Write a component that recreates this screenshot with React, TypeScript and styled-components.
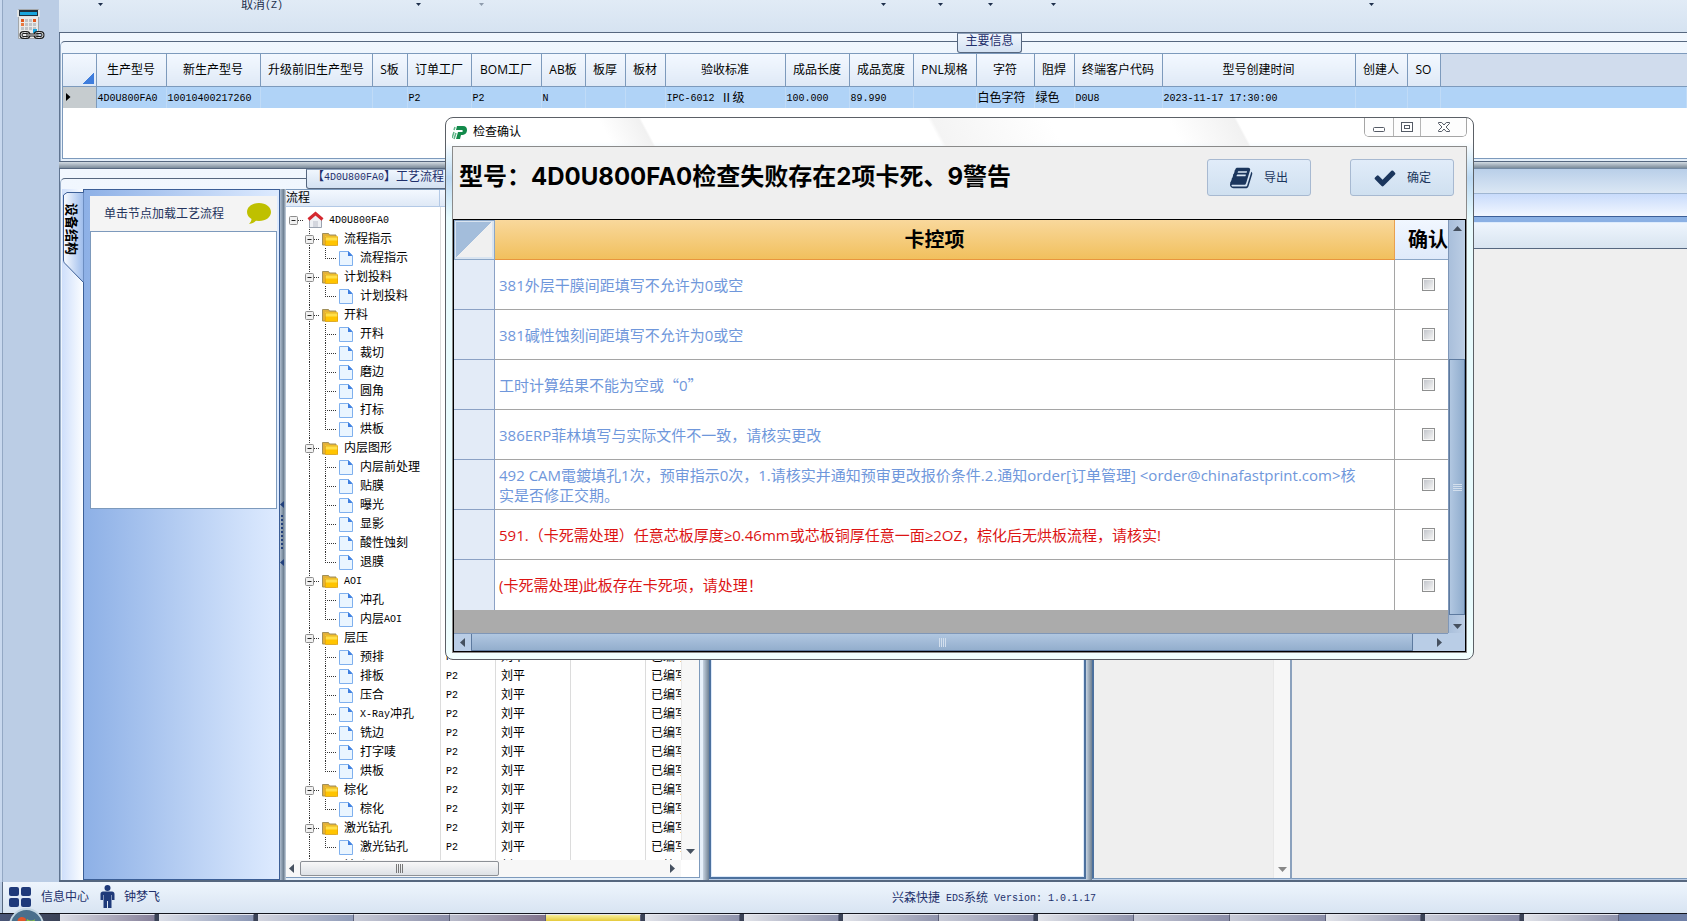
import React from 'react';
import styled, { createGlobalStyle, css } from 'styled-components';

const Global = createGlobalStyle`
  *, *::before, *::after { box-sizing: border-box; }
  body {
    margin: 0;
    background: #bbcde5;
    color: #000;
    font: 12px/16px "Open Sans", "Noto Sans CJK SC", sans-serif;
    overflow: hidden;
  }
  button { font: inherit; padding: 0; border: 0; background: none; color: inherit; }
  svg { display: block; flex: none; }
  table { border-collapse: collapse; border-spacing: 0; }
`;

/* ---------- fixed-pitch text: 12px Chinese with half-width Latin ---------- */

const Latin = styled.span`
  font-family: "Liberation Mono", monospace;
  font-size: 10px;
  line-height: 10px;
  vertical-align: 1px;
`;

const Wide = styled.span`
  font-family: "Noto Sans CJK SC", sans-serif;
`;

function Pitch({ text }: { text: string }) {
  return (
    <>
      {text.split(/([\x20-\x7e]+)/).map((run, i) => (i % 2 ? <Latin key={i}>{run}</Latin> : run))}
    </>
  );
}

/* ---------- page frame ---------- */

const Page = styled.div`
  position: relative;
  display: flex;
  flex-direction: column;
  height: 100vh;
  overflow: hidden;
`;

const Shell = styled.div`
  display: flex;
  flex: 1;
  min-height: 0;
`;

const Rail = styled.nav`
  flex: none;
  width: 59px;
  padding: 9px 0 0 14px;
  border-left: 2px solid #c8d8ee;
  background: linear-gradient(90deg, #93a8c4 1px, #bbcde5 1px);
`;

const Workspace = styled.main`
  display: flex;
  flex-direction: column;
  flex: 1;
  min-width: 0;
`;

const Ribbon = styled.div`
  display: flex;
  flex: none;
  height: 33px;
  border-bottom: 1px solid #56677f;
  background: linear-gradient(#e1ebf6, #d6e3f1);
`;

const RibbonButton = styled.button<{ $w: number; $before?: number; $dim?: boolean }>`
  display: flex;
  justify-content: center;
  align-items: flex-start;
  flex: none;
  width: ${p => p.$w}px;
  margin-left: ${p => p.$before ?? 0}px;
  height: 16px;
  color: ${p => (p.$dim ? '#8e9bac' : '#1e2f4c')};
  line-height: 10px;
  white-space: nowrap;
`;

const Caret = () => (
  <svg width="7" height="8" viewBox="0 0 7 8"><path d="M1 3h5L3.500 6z" fill="currentColor" /></svg>
);

/* ---------- titled groups ---------- */

const Group = styled.section<{ $rule: number }>`
  position: relative;
  display: flex;
  flex-direction: column;
  min-height: 0;
  padding: 20px 0 0 2px;
  border-left: 1px solid #5f7490;
  background: linear-gradient(#f1f7fe, #e6f0fa);
  &::before {
    content: "";
    position: absolute;
    inset: ${p => p.$rule}px 0 0 0;
    border-top: 1px solid #56677f;
    border-left: 1px solid #9bb0ca;
    border-top-left-radius: 5px;
    pointer-events: none;
  }
`;

const GroupTitle = styled.h2<{ $x: number; $w: number }>`
  position: absolute;
  top: 0;
  left: ${p => p.$x}px;
  width: ${p => p.$w}px;
  height: 20px;
  margin: 0;
  border: 1px solid #56677f;
  border-top-color: #8fa3bd;
  border-radius: 0 0 3px 3px;
  background: linear-gradient(#f0f6fd, #d3e1f2);
  color: #1f2f6b;
  font-size: 12px;
  font-weight: 400;
  line-height: 13px;
  text-align: center;
  white-space: nowrap;
`;

const InfoGroup = styled(Group)`
  flex: none;
  height: 129px;
  border-bottom: 1px solid #56677f;
`;

const InfoBody = styled.div`
  position: relative;
  flex: 1;
  margin-bottom: 2px;
  background: #fff;
  border: 1px solid #7d9abc;
  border-right: 0;
`;

const InfoTable = styled.table`
  width: 100%;
  table-layout: fixed;
  th {
    height: 32px;
    padding: 0;
    border-right: 1px solid #7d9abc;
    border-bottom: 1px solid #7d9abc;
    background: linear-gradient(#f3f8ff, #dfe9f6);
    font-weight: 400;
    white-space: nowrap;
  }
  th:last-child { border-right: 0; background: #d0dced; }
  td {
    height: 22px;
    padding: 0 0 0 1px;
    border-right: 1px solid #c0dbf7;
    background: #b0d3f7;
    font-family: "Noto Sans CJK SC", sans-serif;
    line-height: 16px;
    white-space: nowrap;
  }
  td:first-child { border-right: 1px solid #7d9abc; background: #c6cccf; padding-left: 3px; }
`;

const Corner = styled.span`
  display: block;
  width: 11px;
  height: 12px;
  margin: 16px 2px 0 auto;
  background: linear-gradient(135deg, transparent 50%, #3f7ddc 50%);
`;

const SplitBar = styled.div<{ $vertical?: boolean }>`
  flex: none;
  ${p =>
    p.$vertical
      ? css`
          width: 6px;
          background: linear-gradient(90deg, #c7d3e0, #6f8193);
        `
      : css`
          height: 6px;
          background: linear-gradient(#d3dbe2, #7c8b9a);
        `}
`;

const Lower = styled.div`
  display: flex;
  flex: 1;
  min-height: 0;
  border-bottom: 2px solid #56677f;
`;

/* ---------- left: process group ---------- */

const FlowGroup = styled(Group)`
  flex: none;
  width: 644px;
  border-top: 1px solid #56677f;
`;

const FlowBody = styled.div`
  display: flex;
  flex: 1;
  min-height: 0;
`;

const TabStrip = styled.div`
  position: relative;
  flex: none;
  width: 21px;
  background: linear-gradient(90deg, #cfdffb, #fbfdff);
`;

const SideTab = styled.button`
  position: relative;
  display: flex;
  align-items: flex-start;
  width: 21px;
  height: 92px;
  margin-top: 3px;
  padding: 11px 0 0 3px;
  text-align: left;
  svg { position: absolute; left: 1px; top: 0; }
  span {
    position: relative;
    display: block;
    writing-mode: vertical-rl;
    text-orientation: sideways;
    font-size: 13px;
    font-weight: 700;
    line-height: 14px;
  }
`;

const DevicePane = styled.div`
  display: flex;
  flex-direction: column;
  flex: none;
  width: 197px;
  padding: 6px 2px 0 6px;
  border: 1px solid #3c5f97;
  background: linear-gradient(90deg, #8db0e6, #deebff);
`;

const DeviceHead = styled.button`
  display: flex;
  align-items: center;
  justify-content: space-between;
  flex: none;
  height: 35px;
  padding: 0 6px 0 14px;
  background: #f4f4f4;
  color: #24335c;
`;

const DeviceBox = styled.div`
  flex: none;
  height: 278px;
  border: 1px solid #7d9abc;
  background: #fff;
`;

const Grip = styled.div`
  flex: none;
  width: 6px;
  background: linear-gradient(90deg, #aebdce, #6f8193 60%, #c7d3e0);
  svg { margin-top: 312px; }
`;

const TreePane = styled.div`
  display: flex;
  flex-direction: column;
  flex: 1;
  min-width: 0;
  margin: 0 3px 2px 0;
  border: 1px solid #7d9abc;
  border-left: 0;
  background: #fff;
`;

const treeCols = '154px 55px 75px 75px 1fr';

const TreeHead = styled.div`
  display: grid;
  grid-template-columns: ${treeCols};
  flex: none;
  height: 17px;
  border-bottom: 1px solid #b3c9e6;
  background: linear-gradient(#f3f8ff, #dfe9f6);
  line-height: 15px;
  span { border-right: 1px solid #b3c9e6; }
`;

const TreeMid = styled.div`
  display: flex;
  flex: 1;
  min-height: 0;
`;

const TreeRows = styled.div`
  display: flex;
  flex-direction: column;
  flex: 1;
  min-width: 0;
  overflow: hidden;
`;

const TreeRow = styled.div`
  display: grid;
  grid-template-columns: ${treeCols};
  flex: none;
  height: 19px;
  font-family: "Noto Sans CJK SC", sans-serif;
  line-height: 18px;
  white-space: nowrap;
  > span {
    padding-left: 5px;
    border-left: 1px solid #dcdcdc;
    overflow: hidden;
  }
`;

const TreeLead = styled(TreeRow)`
  height: 3px;
`;

const TreeLabel = styled.div`
  display: flex;
  gap: 5px;
  margin-left: -1px;
`;

const VTrack = styled.div<{ $w?: number }>`
  display: flex;
  flex-direction: column;
  justify-content: flex-end;
  align-items: center;
  flex: none;
  width: ${p => p.$w ?? 18}px;
  padding-bottom: 4px;
  border-left: 1px solid #e8e8e8;
  background: #f7f7f7;
`;

const HTrack = styled.div`
  display: flex;
  align-items: center;
  flex: none;
  height: 17px;
  margin-right: 18px;
  padding: 0 4px 0 1px;
  background: #f7f7f7;
`;

const HThumb = styled.div`
  display: flex;
  justify-content: center;
  align-items: center;
  flex: none;
  width: 199px;
  height: 15px;
  margin: 0 auto 0 4px;
  border: 1px solid #8c9096;
  border-radius: 2px;
  background: linear-gradient(#f8f8f8, #dde1e6);
`;

/* ---------- right: stacked bars and panes ---------- */

const RightArea = styled.div`
  display: flex;
  flex-direction: column;
  flex: 1;
  min-width: 0;
  border-top: 1px solid #7389a3;
`;

const Band = styled.div<{ $h: number; $bg: string; $line: string }>`
  flex: none;
  height: ${p => p.$h}px;
  border-bottom: 1px solid ${p => p.$line};
  background: ${p => p.$bg};
`;

const Panes = styled.div`
  display: flex;
  flex: 1;
  min-height: 0;
`;

const BlankPane = styled.div`
  flex: none;
  width: 377px;
  margin-bottom: 1px;
  border: 2px solid #4d719e;
  box-shadow: inset 0 0 0 1px #dce9fa;
  background: #fff;
`;

const GreyPane = styled.div<{ $w?: number }>`
  display: flex;
  justify-content: flex-end;
  ${p => (p.$w ? `flex: none; width: ${p.$w}px; border-right: 2px solid #8ba1bd;` : 'flex: 1;')}
  border-left: ${p => (p.$w ? '2px solid #4d719e' : '0')};
  margin-bottom: 1px;
  border-bottom: 1px solid #7d9abc;
  background: #efefef;
`;

/* ---------- status bar and task bar ---------- */

const StatusBar = styled.footer`
  display: flex;
  align-items: center;
  flex: none;
  position: relative;
  height: 31px;
  margin-left: 2px;
  padding: 0 0 2px 6px;
  border-left: 1px solid #56677f;
  background: linear-gradient(#eef5fd, #d8e4f2);
  color: #22306b;
`;

const StatusItem = styled.button`
  display: flex;
  align-items: center;
  gap: 9px;
  margin-right: 11px;
`;

const Version = styled.span`
  margin-left: 721px;
  white-space: nowrap;
  font-family: "Noto Sans CJK SC", sans-serif;
`;

const TaskBar = styled.div`
  position: relative;
  display: flex;
  flex: none;
  height: 8px;
  padding-left: 60px;
  border-top: 1px solid #14161e;
  background: linear-gradient(90deg, #4a5678, #3a4256 60px, #3a4256 1600px, #6f80a8 1620px);
`;

const TaskButton = styled.button<{ $tone?: string; $joined?: boolean }>`
  flex: none;
  width: ${p => (p.$joined ? 96 : 95)}px;
  margin-right: ${p => (p.$joined ? 0 : 4)}px;
  border-top: 1px solid #e6e8f0;
  border-right: 1px solid #5c6078;
  background: ${p => p.$tone ?? 'linear-gradient(100deg, #c9ccd8, #8a8da8)'};
`;

const Orb = styled.button`
  position: absolute;
  left: 9px;
  top: -6px;
`;

/* ---------- dialog ---------- */

const Dialog = styled.section`
  position: absolute;
  left: 445px;
  right: 213px;
  top: 117px;
  padding: 0 6px 6px;
  border: 1px solid #5b6066;
  border-radius: 8px;
  background:
    linear-gradient(62deg, transparent 0, transparent 30%, #f1f1f1 46%, transparent 47%) 90px 0 / 240px 28px no-repeat,
    linear-gradient(62deg, transparent 52%, #f4f4f4 53%, transparent 80%) 270px 0 / 420px 28px no-repeat,
    linear-gradient(62deg, transparent 30%, #f1f1f1 56%, transparent 57%) 660px 0 / 240px 28px no-repeat,
    linear-gradient(#fff 0, #fff 24px, #dff0fb 40px, #bcd9f3 60px, #e8fbfd 100px, #e8fbfd 480px, #f2fffe);
`;

const TitleBar = styled.header`
  display: flex;
  justify-content: space-between;
  height: 28px;
`;

const TitleText = styled.h1`
  display: flex;
  align-items: center;
  gap: 6px;
  margin: 0;
  font-size: 12px;
  font-weight: 400;
`;

const WindowKeys = styled.div`
  display: flex;
  height: 19px;
  border: 1px solid #a5a5a5;
  border-top: 0;
  border-radius: 0 0 5px 5px;
  overflow: hidden;
`;

const WindowKey = styled.button<{ $w: number }>`
  display: flex;
  justify-content: center;
  align-items: center;
  width: ${p => p.$w}px;
  background: #fdfdfd;
  & + & { border-left: 1px solid #b5b5b5; }
`;

const Client = styled.div`
  border: 1px solid #8a8a8a;
  background: #efefef;
`;

const ClientHead = styled.div`
  display: flex;
  align-items: flex-start;
  gap: 39px;
  height: 72px;
  padding: 12px 12px 0 6px;
`;

const Headline = styled.h2`
  flex: 1;
  margin: 0;
  font-family: Inter, "Noto Sans CJK SC", sans-serif;
  font-size: 24px;
  font-weight: 700;
  line-height: 36px;
  white-space: nowrap;
`;

const Action = styled.button<{ $gap: number }>`
  display: flex;
  justify-content: center;
  align-items: center;
  gap: ${p => p.$gap}px;
  width: 104px;
  height: 37px;
  border: 1px solid #a7b9d1;
  border-radius: 3px;
  background: linear-gradient(#e1ecf9, #cfe0f0);
  color: #1b365d;
`;

const GridFrame = styled.div`
  display: grid;
  grid-template-columns: 1fr 17px;
  border: 1px solid #000;
  background: #b9cde6;
`;

const GridArea = styled.div`
  padding-bottom: 23px;
  background: #ababab;
  overflow: hidden;
`;

const CheckTable = styled.table`
  width: 100%;
  table-layout: fixed;
  border-collapse: separate;
  th {
    height: 40px;
    padding: 0;
    font-size: 20px;
    font-weight: 700;
    line-height: 24px;
    white-space: nowrap;
  }
  td {
    height: 50px;
    border-right: 1px solid #a5a5a5;
    border-bottom: 1px solid #a5a5a5;
    background: #fff;
  }
  tbody td:last-child { border-right: 0; }
  tbody tr:last-child td { border-bottom: 0; }
`;

const CornerHead = styled.th`
  border: 1px solid #8ba6c6;
  background: linear-gradient(to bottom right, #a3bddb 50%, #f0f0f0 50%) content-box, #d9e4f0;
  &&& { padding: 1px 2px 2px 1px; }
`;

const MainHead = styled.th`
  border-right: 1px solid #e8a050;
  border-bottom: 1px solid #e8953e;
  background: linear-gradient(#f9d89c, #f1c05d);
  &&& { padding-right: 20px; }
`;

const ConfirmHead = styled.th`
  border-bottom: 1px solid #8ba6c6;
  background: linear-gradient(#f1f7ff, #dfeafa);
  text-align: left;
  overflow: hidden;
  &&& { padding-left: 13px; }
`;

const RowHead = styled.td`
  &&& { border-color: #8ba1c5; background: #e3ebf7; }
`;

const Message = styled.td<{ $fatal?: boolean }>`
  padding: 0 28px 0 4px;
  color: ${p => (p.$fatal ? '#dc1414' : '#6f97db')};
  font-size: 15px;
  line-height: 20px;
`;

const CheckCell = styled.td`
  padding: 0 13px 0 0;
`;

const Check = styled.input`
  appearance: none;
  display: block;
  width: 13px;
  height: 13px;
  margin: 0 0 0 auto;
  border: 1px solid #8e8f8f;
  background: linear-gradient(135deg, #c3c6cc, #f4f4f4) content-box, #f6f6f6;
  padding: 1px;
`;

const DialogVTrack = styled.div`
  display: flex;
  flex-direction: column;
  align-items: center;
  padding: 4px 0 2px;
  border-left: 1px solid #7f97b8;
  background: linear-gradient(90deg, #a9bfdb, #bccee5);
`;

const DialogVThumb = styled.div`
  display: flex;
  justify-content: center;
  align-items: center;
  width: 16px;
  height: 256px;
  margin: auto 0 7px;
  border: 1px solid #5d7a9f;
  background: linear-gradient(90deg, #b1c7e1, #8faccd);
`;

const DialogHTrack = styled.div`
  display: flex;
  align-items: center;
  height: 18px;
  padding: 0 4px;
  border-top: 1px solid #7f97b8;
  background: #b9cde6;
`;

const DialogHThumb = styled.div`
  display: flex;
  justify-content: center;
  align-items: center;
  flex: 1;
  height: 17px;
  margin: 0 22px 0 4px;
  border: 1px solid #5d7a9f;
  border-top: 0;
  background: linear-gradient(#b1c7e1, #93aecd);
`;

/* ---------- drawings ---------- */

type Dir = 'up' | 'down' | 'left' | 'right';
const arrows: Record<Dir, string> = {
  up: 'M0 7l4.500-5L9 7z',
  down: 'M0 2h9L4.500 7z',
  left: 'M7 0v9L2 4.500z',
  right: 'M2 0v9l5-4.500z',
};

const Key = styled.button`
  display: flex;
  flex: none;
`;

function Arrow({ dir, label, fill = '#45505f' }: { dir: Dir; label: string; fill?: string }) {
  return (
    <Key aria-label={label}>
      <svg width="9" height="9" viewBox="0 0 9 9"><path d={arrows[dir]} fill={fill} /></svg>
    </Key>
  );
}

const GripMark = ({ vertical, stroke }: { vertical?: boolean; stroke: string }) => (
  <svg width="9" height="9" viewBox="0 0 9 9" stroke={stroke}>
    <path d={vertical ? 'M0 1.500h9M0 3.500h9M0 5.500h9M0 7.500h9' : 'M1.500 0v9M3.500 0v9M5.500 0v9M7.500 0v9'} />
  </svg>
);

const Calculator = () => (
  <svg width="30" height="32" viewBox="0 0 30 32">
    <path d="M2.500 .5h20v29h-20z" fill="#e9eaea" stroke="#a3a7aa" />
    <path d="M1 1h23v7H1z" fill="#dfe2e4" />
    <path d="M3 1h19v6H3z" fill="#20303c" />
    <path d="M4 3h17v3H4z" fill="#19a6dd" />
    {[10, 14, 18].map(y => [5, 9, 13, 17].map(x => (
      <rect key={`${x}-${y}`} x={x} y={y} width="3" height="3" fill={y === 10 && (x === 5 || x === 17) ? '#e0581e' : y === 14 && x === 5 ? '#e8793f' : '#bfc3c6'} />
    )))}
    <rect x="17" y="20" width="4" height="4" fill="#19a6dd" />
    <g fill="none" stroke="#1d1d1d" strokeWidth="3"><rect x="5" y="23.500" width="8" height="5" rx="2.500" /><rect x="19" y="23.500" width="8" height="5" rx="2.500" /></g>
    <g fill="none" stroke="#dcdcdc"><rect x="5" y="23.500" width="8" height="5" rx="2.500" /><rect x="19" y="23.500" width="8" height="5" rx="2.500" /></g>
    <path d="M10 26h12" stroke="#1d1d1d" strokeWidth="3" /><path d="M10 26h12" stroke="#eee" />
  </svg>
);

const Box = ({ x }: { x: number }) => (
  <g>
    <rect x={x - 4} y="6" width="8" height="8" rx="1" fill="#f1f1f1" stroke="#8c8c8c" transform="translate(-.5 .5)" />
    <path d={`M${x - 2.5} 10.500h4`} stroke="#222" />
  </g>
);

type Kind = 'root' | 'folder' | 'leaf';

/* Connector lines, expander and icon at the head of one tree row. */
function Branch({ kind, last }: { kind: Kind; last?: boolean }) {
  const dots = { stroke: '#333', strokeDasharray: '1 1', fill: 'none' };
  if (kind === 'root') {
    return (
      <svg width="39" height="19" viewBox="0 0 39 19">
        <path d="M13 10.500h6M24.500 17v2" {...dots} />
        <Box x={9} />
        <path d="M24.500 9.500v8h12v-8l-6-5z" fill="#eef0f4" stroke="#9aa3b0" />
        <path d="M23.500 9.500l7-6 7 6" fill="none" stroke="#d4282f" strokeWidth="3" />
        <rect x="28" y="11" width="5" height="6" fill="#d3d6de" />
      </svg>
    );
  }
  if (kind === 'folder') {
    return (
      <svg width="54" height="19" viewBox="0 0 54 19">
        <path d="M24.500 0v19M29 10.500h6" {...dots} />
        <Box x={25} />
        <path d="M37.500 4.500h6l1 1.500h6.500v10H37.500z" fill="#e3b13a" stroke="#a08f5a" />
        <path d="M40 7.500h13v9H40z" fill="#ffc400" />
        <path d="M40 7.500h13v4H40z" fill="#ffe04a" />
        <path d="M40.500 8h12v8.500h-12z" fill="none" stroke="#d99a10" strokeOpacity=".6" />
      </svg>
    );
  }
  return (
    <svg width="70" height="19" viewBox="0 0 70 19">
      <path d={`M24.500 0v19M40.500 0v${last ? 11 : 19}M42 10.500h9`} {...dots} />
      <path d="M54.500 3.500h9l4 4v10h-13z" fill="#eaf5ff" stroke="#7fb0ee" />
      <path d="M63 3l4.500 5H63z" fill="#3f7fe0" />
    </svg>
  );
}

const Logo = () => (
  <svg width="15" height="15" viewBox="0 0 15 15">
    <path d="M5 1h6c3 0 4 2 4 4 0 3-2 5-6 5L8 14H4l2-7h4c1 0 1-2 0-2H4z" fill="#138a4b" />
    <path d="M3 2L2 5M2 7L0 13M4 8l-2 6" stroke="#5fb487" strokeWidth="1.500" />
  </svg>
);

const Book = () => (
  <svg width="24" height="24" viewBox="0 0 1792 1792" fill="currentColor">
    <path d="M1639 478q40 57 18 129l-275 906q-19 64-76.500 107.500t-122.500 43.500h-923q-77 0-148.500-53.500t-99.500-131.500q-24-67-2-127 0-4 3-27t4-37q1-8-3-21.500t-3-19.500q2-11 8-21t16.500-23.500 16.500-23.500q23-38 45-91.500t30-91.500q3-10 .5-30t-.5-28q3-11 17-28t17-23q21-36 42-92t25-90q1-9-2.500-32t.5-28q4-13 22-30.500t22-22.500q19-26 42.500-84.500t27.500-96.500q1-8-3-25.500t-2-26.500q2-8 9-18t18-23 17-21q8-12 16.500-30.500t15-35 16-36 19.500-32 26.500-23.500 36-11.500 47.500 5.500l-1 3q38-9 51-9h761q74 0 114 56t18 130l-274 906q-36 119-71.500 153.500t-128.500 34.500h-869q-27 0-38 15-11 16-1 43 24 70 144 70h923q29 0 56-15.500t35-41.500l300-987q7-22 5-57 38 15 59 43zm-1064 2q-4 13 2 22.500t20 9.500h608q13 0 25.500-9.500t16.500-22.500l21-64q4-13-2-22.500t-20-9.500h-608q-13 0-25.500 9.500t-16.500 22.500zm-83 256q-4 13 2 22.500t20 9.500h608q13 0 25.500-9.500t16.500-22.500l21-64q4-13-2-22.500t-20-9.500h-608q-13 0-25.500 9.500t-16.500 22.500z" />
  </svg>
);

const Tick = () => (
  <svg width="24" height="24" viewBox="0 0 1792 1792" fill="currentColor">
    <path d="M1671 566q0 40-28 68l-724 724-136 136q-28 28-68 28t-68-28l-136-136-362-362q-28-28-28-68t28-68l136-136q28-28 68-28t68 28l294 295 656-657q28-28 68-28t68 28l136 136q28 28 28 68z" />
  </svg>
);

const Bubble = () => (
  <svg width="24" height="21" viewBox="0 0 24 21">
    <path d="M12 0c7 0 12 4 12 9s-5 9-12 9l-3-.3C7 19.500 5 20.500 2 21c1.500-1.500 2.300-3 2.500-5C1.500 14 0 12 0 9c0-5 5-9 12-9z" fill="#bfc000" />
  </svg>
);

const Squares = () => (
  <svg width="23" height="20" viewBox="0 0 23 20" fill="#1f3a7a">
    <rect width="10" height="9" rx="2" /><rect x="12" width="10" height="9" rx="2" />
    <rect y="11" width="10" height="9" rx="2" /><rect x="12" y="11" width="10" height="9" rx="2" />
  </svg>
);

const Person = () => (
  <svg width="15" height="23" viewBox="0 0 15 23" fill="#1f3a7a">
    <circle cx="7.500" cy="3" r="3" />
    <path d="M3 6.500h9c1.500 0 2.500 1 2.500 2.500v6h-2.500V10h-.5v13H8v-7H7v7H3.500V10H3v5H.5V9c0-1.500 1-2.500 2.500-2.500z" />
  </svg>
);

/* ---------- data ---------- */

const columns: [string, number, string][] = [
  ['生产型号', 70, '4D0U800FA0'],
  ['新生产型号', 94, '10010400217260'],
  ['升级前旧生产型号', 112, ''],
  ['S板', 35, ''],
  ['订单工厂', 64, 'P2'],
  ['BOM工厂', 70, 'P2'],
  ['AB板', 44, 'N'],
  ['板厚', 40, ''],
  ['板材', 40, ''],
  ['验收标准', 120, 'IPC-6012 Ⅱ级'],
  ['成品长度', 64, '100.000'],
  ['成品宽度', 64, '89.990'],
  ['PNL规格', 63, ''],
  ['字符', 58, '白色字符'],
  ['阻焊', 40, '绿色'],
  ['终端客户代码', 88, 'D0U8'],
  ['型号创建时间', 193, '2023-11-17 17:30:00'],
  ['创建人', 52, ''],
  ['SO', 33, ''],
];

const flow: { name: string; steps: string[]; from?: number }[] = [
  { name: '流程指示', steps: ['流程指示'] },
  { name: '计划投料', steps: ['计划投料'] },
  { name: '开料', steps: ['开料', '裁切', '磨边', '圆角', '打标', '烘板'] },
  { name: '内层图形', steps: ['内层前处理', '贴膜', '曝光', '显影', '酸性蚀刻', '退膜'] },
  { name: 'AOI', steps: ['冲孔', '内层AOI'] },
  { name: '层压', steps: ['预排', '排板', '压合', 'X-Ray冲孔', '铣边', '打字唛', '烘板'], from: 1 },
  { name: '棕化', steps: ['棕化'], from: 0 },
  { name: '激光钻孔', steps: ['激光钻孔'], from: 0 },
  { name: '钻孔', steps: [], from: 0 },
];

const checks: { text: string; fatal?: boolean }[] = [
  { text: '381外层干膜间距填写不允许为0或空' },
  { text: '381碱性蚀刻间距填写不允许为0或空' },
  { text: '工时计算结果不能为空或“0”' },
  { text: '386ERP菲林填写与实际文件不一致，请核实更改' },
  { text: '492 CAM電鍍填孔1次，预审指示0次，1.请核实并通知预审更改报价条件.2.通知order[订单管理] <order@chinafastprint.com>核实是否修正交期。' },
  { text: '591.（卡死需处理）任意芯板厚度≥0.46mm或芯板铜厚任意一面≥2OZ，棕化后无烘板流程，请核实!', fatal: true },
  { text: '(卡死需处理)此板存在卡死项，请处理！', fatal: true },
];

const silver = 'linear-gradient(100deg, #e2e4ea, #8f93ac)';
const tasks: { tone?: string; joined?: boolean }[] = [
  { tone: 'linear-gradient(100deg, #dcdee6, #857f99)' },
  { tone: 'linear-gradient(100deg, #dcdfe8, #8a96b4)' },
  { joined: true, tone: 'linear-gradient(100deg, #d3d5df, #8f9bb8)' },
  { joined: true },
  { joined: true, tone: 'linear-gradient(100deg, #b9bccb, #80728c)' },
  { tone: 'linear-gradient(#f6ee9c, #e5ca3a)' },
  { tone: silver }, { tone: silver },
  { joined: true, tone: silver }, {},
  { joined: true, tone: silver }, { joined: true }, { joined: true },
  { tone: silver }, {}, { tone: silver },
];

function Node({ kind, name, last, done }: { kind: Kind; name: string; last?: boolean; done?: boolean }) {
  return (
    <TreeRow>
      <TreeLabel><Branch kind={kind} last={last} /><div><Pitch text={name} /></div></TreeLabel>
      <span>{done && <Latin>P2</Latin>}</span>
      <span>{done && '刘平'}</span>
      <span />
      <span>{done && '已编写'}</span>
    </TreeRow>
  );
}

export default function App() {
  return (
    <Page>
      <Global />
      <Shell>
        <Rail><button aria-label="计算器"><Calculator /></button></Rail>
        <Workspace>
          <Ribbon>
            <RibbonButton $w={82} aria-label="菜单一"><Caret /></RibbonButton>
            <RibbonButton $w={242}><span>取消<Latin>(Z)</Latin></span></RibbonButton>
            <RibbonButton $w={70} aria-label="菜单二"><Caret /></RibbonButton>
            <RibbonButton $w={56} $dim aria-label="菜单三"><Caret /></RibbonButton>
            <RibbonButton $w={57} $before={346} aria-label="菜单四"><Caret /></RibbonButton>
            <RibbonButton $w={56} aria-label="菜单五"><Caret /></RibbonButton>
            <RibbonButton $w={44} aria-label="菜单六"><Caret /></RibbonButton>
            <RibbonButton $w={82} aria-label="菜单七"><Caret /></RibbonButton>
            <RibbonButton $w={60} $before={247} aria-label="菜单八"><Caret /></RibbonButton>
          </Ribbon>

          <InfoGroup $rule={8}>
            <InfoBody>
              <InfoTable>
                <colgroup>
                  <col style={{ width: 33 }} />
                  {columns.map(([name, w]) => <col key={name} style={{ width: w }} />)}
                  <col />
                </colgroup>
                <thead>
                  <tr>
                    <th><Corner /></th>
                    {columns.map(([name]) => <th key={name}>{name}</th>)}
                    <th />
                  </tr>
                </thead>
                <tbody>
                  <tr>
                    <td><svg width="5" height="8" viewBox="0 0 5 8"><path d="M0 0l4.500 4L0 8z" /></svg></td>
                    {columns.map(([name, , value]) => <td key={name}><Pitch text={value} /></td>)}
                    <td />
                  </tr>
                </tbody>
              </InfoTable>
            </InfoBody>
            <GroupTitle $x={897} $w={65}>主要信息</GroupTitle>
          </InfoGroup>
          <SplitBar />

          <Lower>
            <FlowGroup $rule={9}>
              <FlowBody>
                <TabStrip>
                  <SideTab>
                    <svg width="21" height="92" viewBox="0 0 21 92">
                      <defs><linearGradient id="tab"><stop offset="0" stopColor="#fafcff" /><stop offset="1" stopColor="#9dbcec" /></linearGradient></defs>
                      <path d="M20.500 .5H4L.5 3v65c0 2 1 3 2 4l18 18.500" fill="url(#tab)" stroke="#3c5f97" />
                    </svg>
                    <span>设备结构</span>
                  </SideTab>
                </TabStrip>
                <DevicePane>
                  <DeviceHead>单击节点加载工艺流程<Bubble /></DeviceHead>
                  <DeviceBox />
                </DevicePane>
                <Grip>
                  <svg width="5" height="66" viewBox="0 0 5 66" fill="#22407c">
                    <path d="M4 0v7L0 3.500zM4 58v7l-4-3.500z" />
                    {[14, 18, 22, 26, 30, 34, 38, 42, 46].map(y => <rect key={y} x="1" y={y} width="2" height="2" />)}
                  </svg>
                </Grip>
                <TreePane>
                  <TreeHead><span>流程</span><span /><span /><span /></TreeHead>
                  <TreeMid>
                    <TreeRows>
                      <TreeLead><div /><span /><span /><span /><span /></TreeLead>
                      <Node kind="root" name="4D0U800FA0" />
                      {flow.map(({ name, steps, from = 99 }) => (
                        <React.Fragment key={name}>
                          <Node kind="folder" name={name} done={from < 1} />
                          {steps.map((step, i) => (
                            <Node key={step} kind="leaf" name={step} last={i === steps.length - 1} done={from < i + 2} />
                          ))}
                        </React.Fragment>
                      ))}
                    </TreeRows>
                    <VTrack><Arrow dir="down" label="向下滚动" /></VTrack>
                  </TreeMid>
                  <HTrack>
                    <Arrow dir="left" label="向左滚动" />
                    <HThumb><GripMark stroke="#777" /></HThumb>
                    <Arrow dir="right" label="向右滚动" />
                  </HTrack>
                </TreePane>
              </FlowBody>
              <GroupTitle $x={246} $w={144}><Pitch text="【4D0U800FA0】工艺流程" /></GroupTitle>
            </FlowGroup>

            <RightArea>
              <Band $h={25} $bg="linear-gradient(#b9cfe9, #dbe7f4)" $line="#9fb6d2" />
              <Band $h={23} $bg="linear-gradient(#c8dbfb, #f2f7ff)" $line="#3c5f97" />
              <Band $h={6} $bg="#8ab0e4" $line="#dcebfd" />
              <Band $h={26} $bg="linear-gradient(#eef5fd, #d8e4f0)" $line="#56677f" />
              <Panes>
                <SplitBar $vertical />
                <BlankPane />
                <SplitBar $vertical />
                <GreyPane $w={200}><VTrack $w={17}><Arrow dir="down" label="向下滚动" fill="#888" /></VTrack></GreyPane>
                <GreyPane />
              </Panes>
            </RightArea>
          </Lower>
        </Workspace>
      </Shell>

      <StatusBar>
        <StatusItem><Squares />信息中心</StatusItem>
        <StatusItem><Person />钟梦飞</StatusItem>
        <Version><Pitch text="兴森快捷 EDS系统 Version: 1.0.1.17" /></Version>
      </StatusBar>
      <TaskBar>
        {tasks.map((t, i) => <TaskButton key={i} $tone={t.tone} $joined={t.joined} aria-label={`窗口${i + 1}`} />)}
        <Orb aria-label="开始">
          <svg width="35" height="14" viewBox="0 0 35 14">
            <circle cx="17.500" cy="17.500" r="16.500" fill="#4a6f8c" stroke="#c3d6e2" strokeWidth="2" />
            <path d="M9 11c3-3 6-2 8 0l-1 4H8z" fill="#e2562a" /><path d="M18 11c3 2 6 2 8 0l-1 4h-8z" fill="#8cc63f" />
          </svg>
        </Orb>
      </TaskBar>

      <Dialog role="dialog" aria-labelledby="dialog-title">
        <TitleBar>
          <TitleText id="dialog-title"><Logo />检查确认</TitleText>
          <WindowKeys>
            <WindowKey $w={28} aria-label="最小化">
              <svg width="12" height="12" viewBox="0 0 12 12"><rect x=".5" y="6.500" width="11" height="4" rx="1" fill="#fff" stroke="#555b66" /></svg>
            </WindowKey>
            <WindowKey $w={27} aria-label="最大化">
              <svg width="12" height="10" viewBox="0 0 12 10" fill="#fff" stroke="#555b66"><rect x=".5" y=".5" width="11" height="9" /><rect x="3.500" y="3.500" width="5" height="3" /></svg>
            </WindowKey>
            <WindowKey $w={46} aria-label="关闭">
              <svg width="12" height="10" viewBox="0 0 12 10"><path d="M.5.500h3.200L6 3 8.300.5h3.200v1L8 5l3.500 3.500v1H8.300L6 7 3.700 9.500H.5v-1L4 5 .5 1.500z" fill="#fff" stroke="#555b66" /></svg>
            </WindowKey>
          </WindowKeys>
        </TitleBar>
        <Client>
          <ClientHead>
            <Headline>型号：4D0U800FA0检查失败存在2项卡死、9警告</Headline>
            <Action $gap={10}><Book />导出</Action>
            <Action $gap={10}><Tick />确定</Action>
          </ClientHead>
          <GridFrame>
            <GridArea>
              <CheckTable>
                <colgroup><col style={{ width: 41 }} /><col /><col style={{ width: 53 }} /></colgroup>
                <thead>
                  <tr><CornerHead /><MainHead>卡控项</MainHead><ConfirmHead>确认</ConfirmHead></tr>
                </thead>
                <tbody>
                  {checks.map(({ text, fatal }) => (
                    <tr key={text}>
                      <RowHead />
                      <Message $fatal={fatal}>
                        {text.split(/([“”])/).map((part, i) => (i % 2 ? <Wide key={i}>{part}</Wide> : part))}
                      </Message>
                      <CheckCell><Check type="checkbox" aria-label={`确认 ${text}`} /></CheckCell>
                    </tr>
                  ))}
                </tbody>
              </CheckTable>
            </GridArea>
            <DialogVTrack>
              <Arrow dir="up" label="向上滚动" />
              <DialogVThumb><GripMark vertical stroke="#d3dfed" /></DialogVThumb>
              <Arrow dir="down" label="向下滚动" />
            </DialogVTrack>
            <DialogHTrack>
              <Arrow dir="left" label="向左滚动" />
              <DialogHThumb><GripMark stroke="#d3dfed" /></DialogHThumb>
              <Arrow dir="right" label="向右滚动" />
            </DialogHTrack>
          </GridFrame>
        </Client>
      </Dialog>
    </Page>
  );
}
